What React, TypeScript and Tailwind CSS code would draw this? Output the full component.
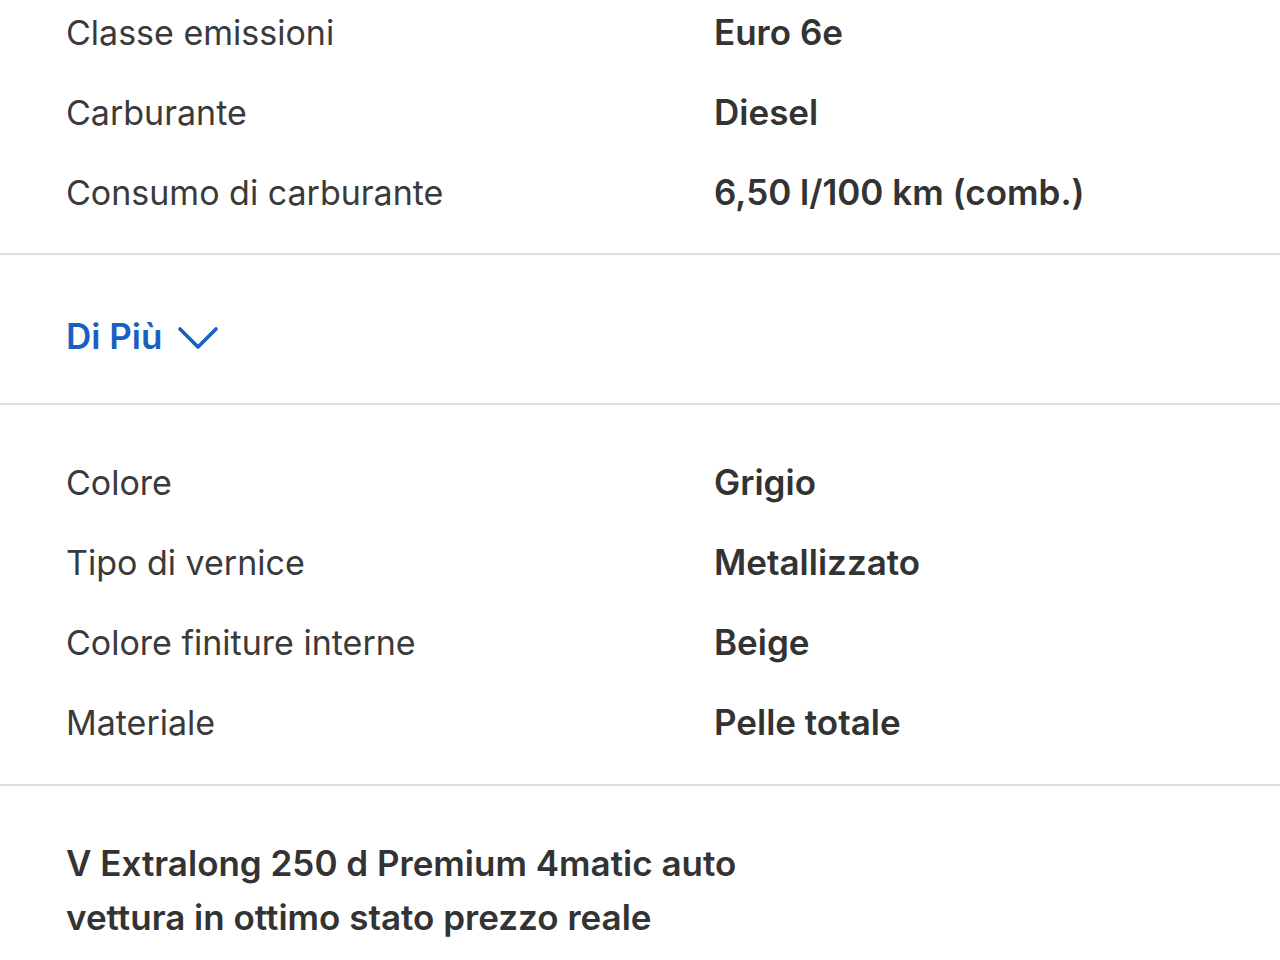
import React from "react";

const Row = ({ label, value }: { label: string; value: string }) => (
  <div className="flex h-20 items-center">
    <div className="w-[714px] pl-[66px] text-[34px] text-[#3a3a3a]">{label}</div>
    <div className="text-[35px] font-semibold text-[#333333]">{value}</div>
  </div>
);

export default function App() {
  return (
    <div
      className="h-[960px] w-[1280px] overflow-hidden bg-white"
      style={{ fontFamily: "Inter, 'Noto Sans', sans-serif" }}
    >
      <div className="-mt-2 pb-[21px]">
        <Row label="Classe emissioni" value="Euro 6e" />
        <Row label="Carburante" value="Diesel" />
        <Row label="Consumo di carburante" value="6,50 l/100 km (comb.)" />
      </div>
      <div className="h-[2px] bg-[#dedede]" />
      <div className="flex h-[148px] items-center pl-[66px] pt-[15px]">
        <span className="text-[35px] font-semibold text-[#1a5fc4]">Di Più</span>
        <svg className="ml-[15px] mt-[2px]" width="42" height="24" viewBox="0 0 42 24" fill="none">
          <path d="M3 3 L21 21 L39 3" stroke="#1a5fc4" strokeWidth="3.6" strokeLinecap="round" strokeLinejoin="round" />
        </svg>
      </div>
      <div className="h-[2px] bg-[#dedede]" />
      <div className="pt-[37px] pb-[22px]">
        <Row label="Colore" value="Grigio" />
        <Row label="Tipo di vernice" value="Metallizzato" />
        <Row label="Colore finiture interne" value="Beige" />
        <Row label="Materiale" value="Pelle totale" />
      </div>
      <div className="h-[2px] bg-[#dedede]" />
      <div className="pl-[66px] pt-[50px] text-[35px] font-semibold leading-[54px] text-[#333333]">
        V Extralong 250 d Premium 4matic auto
        <br />
        vettura in ottimo stato prezzo reale
      </div>
    </div>
  );
}
